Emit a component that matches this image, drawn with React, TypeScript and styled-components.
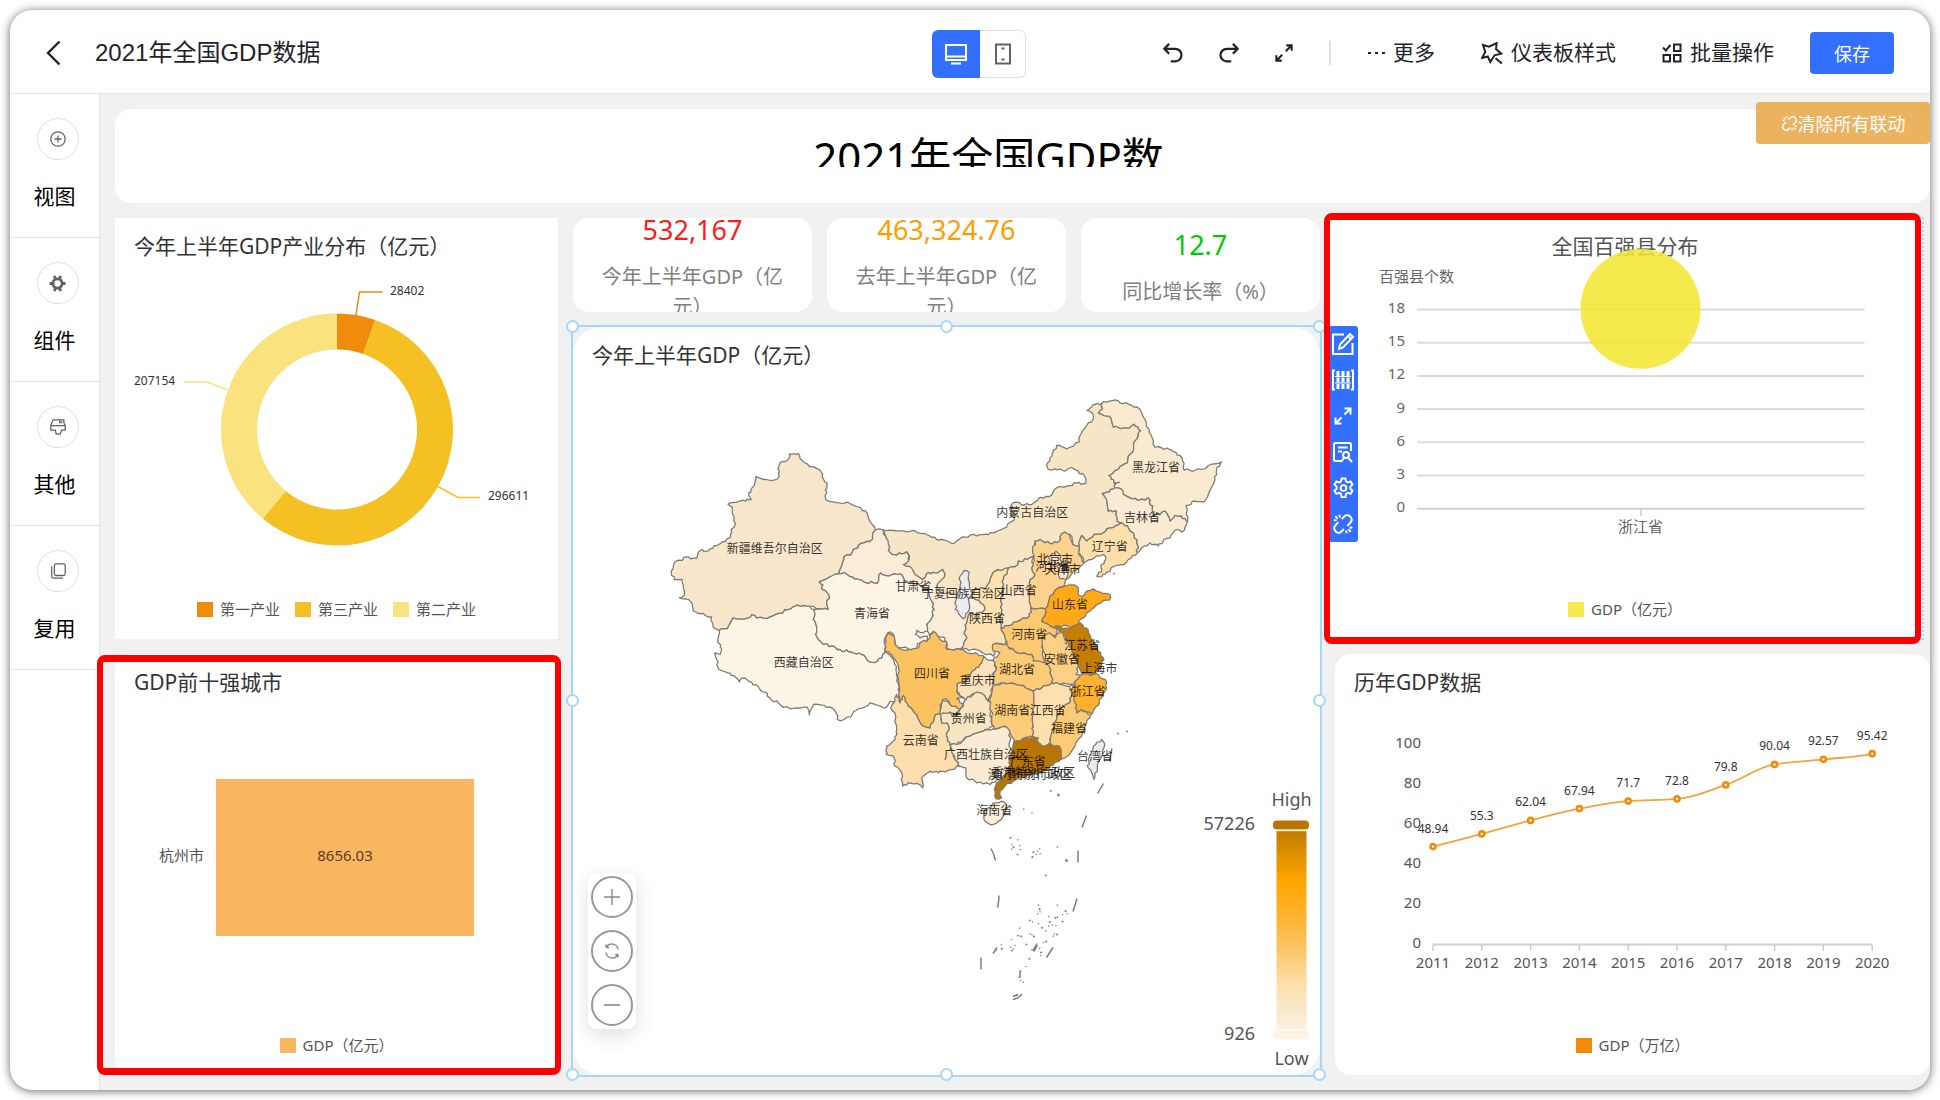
import React from "react";
import styled, { createGlobalStyle, css } from "styled-components";

const UI_FONT = `"Liberation Sans", "Noto Sans CJK SC", sans-serif`;
const CHART_FONT = `"Noto Sans", "Noto Sans CJK SC", sans-serif`;
const BLUE = "#3370ff";
const SELECT = "#a6d7fb";

const GlobalStyle = createGlobalStyle`
  *, *::before, *::after { box-sizing: border-box; }
  body { margin: 0; background: #fff; font-family: ${UI_FONT}; color: #1f2329; }
  button { font-family: inherit; margin: 0; padding: 0; border: 0; background: none; color: inherit; cursor: pointer; }
  h1, h2, p { margin: 0; font-weight: 400; }
`;

/* ---------- shell ---------- */

const Page = styled.div`
  min-height: 100vh;
  padding: 10px;
  display: flex;
`;

const Shell = styled.div`
  flex: 1;
  min-width: 0;
  display: flex;
  flex-direction: column;
  background: #fff;
  border-radius: 22px;
  overflow: hidden;
  box-shadow: 0 1px 10px rgba(0, 0, 0, 0.6);
`;

const Header = styled.header`
  height: 84px;
  padding: 2px 36px 0;
  display: grid;
  grid-template-columns: 1fr auto 1fr;
  align-items: center;
  border-bottom: 1px solid #e3e4e6;
`;

const HeaderLeft = styled.div`
  display: flex;
  align-items: center;
  gap: 34px;
`;

const HeaderTitle = styled.h1`
  font-size: 24px;
  line-height: 32px;
  white-space: nowrap;
`;

const HeaderRight = styled.div`
  display: flex;
  align-items: center;
  justify-content: flex-end;
  gap: 36px;
`;

const Menu = styled.div`
  display: flex;
  align-items: center;
  gap: 46px;
`;

const Divider = styled.span`
  width: 2px;
  height: 24px;
  background: #dcdfe6;
`;

const IconButton = styled.button`
  display: flex;
  align-items: center;
  justify-content: center;
`;

const TextButton = styled.button`
  display: flex;
  align-items: center;
  gap: 8px;
  font-size: 21px;
  line-height: 30px;
  white-space: nowrap;
`;

const SaveButton = styled.button`
  width: 84px;
  height: 42px;
  border-radius: 4px;
  background: ${BLUE};
  color: #fff;
  font-size: 18px;
`;

const Toggle = styled.div`
  display: flex;
  margin: 2px 0 0 18px;
  height: 48px;
`;

const ToggleButton = styled.button<{ $active?: boolean }>`
  display: flex;
  align-items: center;
  justify-content: center;
  ${(p) =>
    p.$active
      ? css`
          width: 48px;
          background: ${BLUE};
          color: #fff;
          border-radius: 6px 0 0 6px;
        `
      : css`
          width: 46px;
          color: #606266;
          border: 1px solid #dcdfe6;
          border-left: 0;
          border-radius: 0 6px 6px 0;
        `}
`;

const Body = styled.div`
  flex: 1;
  display: flex;
`;

const Sidebar = styled.nav`
  width: 90px;
  flex: none;
  border-right: 1px solid #e3e4e6;
`;

const SideItem = styled.button`
  width: 100%;
  height: 144px;
  padding-top: 24px;
  display: flex;
  flex-direction: column;
  align-items: center;
  gap: 21px;
  border-bottom: 1px solid #e3e4e6;
  color: #000;
  font-size: 21px;
  line-height: 32px;
`;

const SideCircle = styled.span`
  width: 42px;
  height: 42px;
  margin-left: 6px;
  display: flex;
  align-items: center;
  justify-content: center;
  border: 1px solid #dcdfe6;
  border-radius: 50%;
  color: #606266;
`;

/* ---------- canvas ---------- */

const Canvas = styled.main`
  position: relative;
  flex: 1;
  min-width: 0;
  padding: 15px 0 15px 15px;
  display: flex;
  flex-direction: column;
  gap: 15px;
  background: #f1f1f1;
  font-family: ${CHART_FONT};
`;

const Banner = styled.section`
  height: 94px;
  padding-top: 20px;
  padding-right: 68px;
  border-radius: 16px;
  background: #fff;
`;

const BannerTitle = styled.h2`
  width: 378px;
  height: 38px;
  margin: 0 auto;
  overflow: hidden;
  color: #000;
  font-size: 42px;
  line-height: 56px;
  text-align: center;
  word-break: break-all;
`;

const ClearButton = styled.button`
  position: absolute;
  top: 8px;
  right: 0;
  width: 174px;
  height: 42px;
  display: flex;
  align-items: center;
  justify-content: center;
  border-radius: 4px;
  background: rgba(230, 162, 60, 0.82);
  color: #fff;
  font-family: ${UI_FONT};
  font-size: 18px;
`;

const Columns = styled.div`
  flex: 1;
  display: grid;
  grid-template-columns: 443fr 747fr 595fr;
  gap: 15px;
`;

const Column = styled.div`
  min-width: 0;
  display: flex;
  flex-direction: column;
  gap: 15px;
`;

const Card = styled.section<{ $square?: boolean; $shifted?: boolean }>`
  position: relative;
  flex: 1;
  min-height: 421px;
  display: flex;
  flex-direction: column;
  background: #fff;
  border-radius: ${(p) => (p.$square ? "0" : "16px")};
  ${(p) =>
    p.$shifted &&
    css`
      margin: 0 7px 0 -8px;
      border-radius: 0;
      outline: 2px dotted ${SELECT};
      outline-offset: -1px;
    `}
`;

const CardTitle = styled.h2<{ $center?: boolean }>`
  height: 56px;
  flex: none;
  padding: 0 19px;
  color: ${(p) => (p.$center ? "#555" : "#333")};
  font-size: 21px;
  line-height: 56px;
  text-align: ${(p) => (p.$center ? "center" : "left")};
  white-space: nowrap;
`;

const Plot = styled.svg`
  display: block;
  width: 100%;
  height: 0;
  flex: 1 1 0;
  overflow: visible;
`;

const Legend = styled.div`
  height: 60px;
  flex: none;
  display: flex;
  align-items: center;
  justify-content: center;
  gap: 15px;
  color: #555;
  font-size: 15px;
  line-height: 20px;
`;

const LegendItem = styled.span<{ $color: string }>`
  display: flex;
  align-items: center;
  gap: 7px;
  &::before {
    content: "";
    width: 16px;
    height: 15px;
    background: ${(p) => p.$color};
  }
`;

const Highlight = styled.div<{ $inset: string }>`
  position: absolute;
  inset: ${(p) => p.$inset};
  border: solid #f00;
  border-width: 7px 6px;
  border-radius: 8px;
  pointer-events: none;
  z-index: 3;
`;

const Stats = styled.div`
  display: grid;
  grid-template-columns: repeat(3, 1fr);
  gap: 15px;
`;

const Stat = styled.section`
  height: 94px;
  padding: 0 24px;
  display: flex;
  flex-direction: column;
  align-items: center;
  justify-content: center;
  overflow: hidden;
  border-radius: 16px;
  background: #fff;
`;

const StatValue = styled.strong<{ $color: string }>`
  flex: none;
  margin-bottom: 10px;
  color: ${(p) => p.$color};
  font-size: 27px;
  font-weight: 400;
  line-height: 44px;
`;

const StatLabel = styled.span`
  flex: none;
  color: #808080;
  font-size: 20px;
  line-height: 30px;
  text-align: center;
`;

const MapCard = styled.section`
  position: relative;
  flex: 1;
  display: flex;
  flex-direction: column;
  border-radius: 28px;
  background: #fff;
`;

const Selection = styled.div`
  position: absolute;
  inset: -2px;
  border: 2px solid ${SELECT};
  pointer-events: none;
`;

const Handle = styled.i<{ $x: number; $y: number }>`
  position: absolute;
  left: ${(p) => p.$x}%;
  top: ${(p) => p.$y}%;
  width: 13px;
  height: 13px;
  margin: -7px;
  border: 2px solid ${SELECT};
  border-radius: 50%;
  background: #fff;
`;

const ZoomPanel = styled.div`
  position: absolute;
  left: 15px;
  bottom: 46px;
  width: 48px;
  padding: 3px 0;
  display: flex;
  flex-direction: column;
  align-items: center;
  gap: 12px;
  border-radius: 8px;
  background: #fff;
  box-shadow: 0 6px 20px rgba(0, 0, 0, 0.13);
`;

const ZoomButton = styled.button`
  width: 42px;
  height: 42px;
  display: flex;
  align-items: center;
  justify-content: center;
  border: 2px solid #999;
  border-radius: 50%;
  color: #8a8a8a;
`;

const CardTools = styled.div`
  position: absolute;
  left: 1px;
  top: 108px;
  width: 30px;
  z-index: 2;
  display: flex;
  flex-direction: column;
  border-radius: 3px;
  background: ${BLUE};
  color: #fff;
`;

const ToolButton = styled.button`
  height: 36px;
  display: flex;
  align-items: center;
  justify-content: center;
`;

/* ---------- icons ---------- */

const Icon = ({
  size = 20,
  box = 20,
  w = 2,
  children,
}: {
  size?: number;
  box?: number;
  w?: number;
  children: React.ReactNode;
}) => (
  <svg width={size} height={size} viewBox={`0 0 ${box} ${box}`} fill="none" stroke="currentColor" strokeWidth={w} aria-hidden="true">
    {children}
  </svg>
);

const UnlinkIcon = ({ size, w }: { size: number; w: number }) => (
  <Icon size={size} box={24} w={w}>
    <path d="M7 10 3.5 13.8a4 4 0 0 0 0 5.6l1 1a4 4 0 0 0 5.6 0L13 17.5" />
    <path d="M10.5 6.5 13.8 3.5a4 4 0 0 1 5.6 0l1 1a4 4 0 0 1 0 5.6L16.8 14" />
    <path d="M2 7.5l3 .8M3.6 3.6l2.6 2.6M8 1.8l.8 3M16 22l-.7-3M20.4 20.4l-2.6-2.6M22.2 16.3l-3-.8" />
  </Icon>
);

const GearPath =
  "M10 1.5h4l.6 3 1.9 1.1 2.9-1 2 3.4-2.3 2v2.2l2.3 2-2 3.4-2.9-1-1.9 1.1-.6 3.3h-4l-.6-3.3-1.9-1.1-2.9 1-2-3.4 2.3-2V10l-2.3-2 2-3.4 2.9 1 1.9-1.1z";

/* ---------- pie ---------- */

const industries = [
  { name: "第一产业", value: 28402, color: "#f18c0b" },
  { name: "第三产业", value: 296611, color: "#f5c023" },
  { name: "第二产业", value: 207154, color: "#fae27e" },
];

const ringPath = (from: number, to: number) => {
  const [cx, cy, R, r] = [337, 429.5, 116, 80];
  const at = (a: number, k: number) =>
    `${(cx + k * Math.sin(a * 2 * Math.PI)).toFixed(2)} ${(cy - k * Math.cos(a * 2 * Math.PI)).toFixed(2)}`;
  const big = to - from > 0.5 ? 1 : 0;
  return `M${at(from, R)}A${R} ${R} 0 ${big} 1 ${at(to, R)}L${at(to, r)}A${r} ${r} 0 ${big} 0 ${at(from, r)}Z`;
};

const PieChart = () => {
  const total = industries.reduce((s, d) => s + d.value, 0);
  let acc = 0;
  return (
    <Plot viewBox="115 274 443 305" role="img" aria-label="今年上半年GDP产业分布">
      {industries.map((d) => {
        const from = acc / total;
        acc += d.value;
        return <path key={d.name} d={ringPath(from, acc / total)} fill={d.color} />;
      })}
      <g fill="none" strokeWidth="1.5">
        <path d="M356 315 359.5 292H382.5" stroke="#f18c0b" />
        <path d="M438 486.5 458 497.5H480" stroke="#f5c023" />
        <path d="M227 389.5 207 382H184" stroke="#fae27e" />
      </g>
      <g fontSize="12" fill="#333">
        <text x="390" y="295">28402</text>
        <text x="488" y="500">296611</text>
        <text x="134" y="385">207154</text>
      </g>
    </Plot>
  );
};

/* ---------- bar ---------- */

const BarChart = () => (
  <Plot viewBox="115 710 443 305" role="img" aria-label="GDP前十强城市" fontSize="15">
    <rect x="216" y="779" width="258" height="157" fill="#f9b55f" />
    <text x="345" y="861" textAnchor="middle" fill="#5a4022">8656.03</text>
    <text x="204" y="861" textAnchor="end" fill="#555">杭州市</text>
  </Plot>
);

/* ---------- bubble ---------- */

const BubbleChart = () => (
  <Plot viewBox="1327 274 596 305" role="img" aria-label="全国百强县分布" fontSize="15" fill="#666">
    <text x="1379" y="282">百强县个数</text>
    {[18, 15, 12, 9, 6, 3, 0].map((v, i) => (
      <g key={v}>
        <text x="1405" y={313 + Math.round(i * 33.2)} textAnchor="end">
          {v}
        </text>
        <path d={`M1417 ${309.5 + i * 33.2}H1864.5`} stroke={v ? "#dcdcdc" : "#d0d0d0"} strokeWidth="2" />
      </g>
    ))}
    <path d="M1641 509v7" stroke="#ccc" strokeWidth="1.5" />
    <circle cx="1640.5" cy="308.8" r="60" fill="rgb(243,231,50)" fillOpacity="0.87" />
    <text x="1640.5" y="532" textAnchor="middle">浙江省</text>
  </Plot>
);

/* ---------- line ---------- */

const yearly: [number, number][] = [
  [2011, 48.94],
  [2012, 55.3],
  [2013, 62.04],
  [2014, 67.94],
  [2015, 71.7],
  [2016, 72.8],
  [2017, 79.8],
  [2018, 90.04],
  [2019, 92.57],
  [2020, 95.42],
];

const LineChart = () => {
  const pts = yearly.map(([, v], i) => [1433 + i * 48.8, 944.5 - v * 2]);
  const slope = (i: number) => {
    if (i === 0 || i === pts.length - 1) return -0.25;
    const a = (pts[i][1] - pts[i - 1][1]) / 48.8;
    const b = (pts[i + 1][1] - pts[i][1]) / 48.8;
    return (2 * a * b) / (a + b);
  };
  const d = pts
    .map(([x, y], i) => {
      if (!i) return `M${x} ${y}`;
      const [px, py] = pts[i - 1];
      return `C${px + 18} ${py + slope(i - 1) * 18} ${x - 18} ${y - slope(i) * 18} ${x} ${y}`;
    })
    .join("");
  return (
    <Plot viewBox="1335 710 595 305" role="img" aria-label="历年GDP数据" fontSize="15" fill="#555">
      {[100, 80, 60, 40, 20, 0].map((v) => (
        <text key={v} x="1421" y={948 - v * 2} textAnchor="end">
          {v}
        </text>
      ))}
      <path d="M1433 944.5H1872.5" stroke="#d0d0d0" strokeWidth="2" />
      <path d={d} fill="none" stroke="#f5a33a" strokeWidth="1.8" />
      {yearly.map(([year, v], i) => (
        <g key={year}>
          <path d={`M${pts[i][0]} 945v6`} stroke="#ccc" strokeWidth="1.5" />
          <circle cx={pts[i][0]} cy={pts[i][1]} r="2.5" fill="#fff" stroke="#f18c0b" strokeWidth="2.6" />
          <text x={pts[i][0]} y={pts[i][1] - 14} textAnchor="middle" fontSize="12" fill="#333">
            {v}
          </text>
          <text x={pts[i][0]} y="968" textAnchor="middle">
            {year}
          </text>
        </g>
      ))}
    </Plot>
  );
};

/* ---------- map ---------- */

type Pt = [number, number];
/* Outlines are kept in three local grids: west, north-east and south-east. */
const ORIGIN: Record<string, Pt> = { w: [0, 0], n: [900, 0], e: [660, 540] };

const provinces: [string, string, string][] = [
  ["w", "#fcf4e5", "238,752 262,747 278,715 310,719 322,716 336,705 350,715 372,716 390,712 408,704 428,700 434,690 458,682 488,678 510,680 522,690 525,705 520,720 528,735 527,765 537,782 548,793 575,799 600,810 625,816 658,821 672,827 680,840 695,848 712,845 725,835 735,818 750,828 762,845 770,862 770,890 775,915 777,945 768,965 750,965 738,985 715,978 690,970 665,986 648,993 632,1012 612,1020 592,1020 588,1000 575,985 545,977 522,974 508,1006 502,984 470,985 430,984 415,970 392,960 376,938 360,930 335,908 320,900 305,896 298,907 280,888 258,878 236,870 230,840 224,820 240,825 245,808 233,785"],
  ["w", "#f7e6cb", "462,222 475,222 480,237 493,249 508,261 522,262 538,270 548,284 550,298 562,312 561,326 555,350 558,361 580,367 600,370 630,372 650,381 668,394 680,399 686,417 696,434 706,451 699,460 698,478 690,486 672,490 655,498 638,516 632,527 612,531 606,556 598,583 575,592 560,598 538,607 549,616 547,630 562,640 569,656 560,668 565,690 545,689 528,687 510,680 488,678 458,682 434,690 428,700 408,704 390,712 372,716 350,715 336,705 322,716 310,719 278,715 262,747 238,752 220,743 215,712 196,708 180,703 160,694 157,675 145,660 118,654 133,648 130,625 126,600 103,600 94,574 103,550 120,542 145,532 152,538 170,536 180,514 205,514 230,498 255,486 272,474 273,450 287,433 283,412 277,400 276,382 264,374 290,368 310,362 334,360 327,348 336,325 348,291 358,295 380,300 402,302 418,290 416,262 420,250 436,246 447,236 448,223"],
  ["n", "#f7e6c6", "-172,450 -140,453 -100,457 -75,454 -45,462 -30,470 -5,482 25,486 36,492 60,478 90,467 130,465 160,460 190,447 222,422 213,395 213,378 225,368 245,376 275,375 297,355 325,352 350,325 380,320 410,310 437,312 437,295 415,275 395,264 375,275 345,268 325,270 320,260 335,230 350,198 380,208 418,187 422,165 445,130 460,118 458,102 441,93 460,75 485,72 488,88 475,100 492,108 508,110 520,143 550,145 568,146 582,134 602,153 595,170 582,188 578,218 565,230 562,250 535,270 506,288 522,308 525,325 500,338 487,342 500,360 505,395 530,395 532,425 545,430 525,440 500,448 490,460 462,465 440,485 425,468 418,500 398,495 390,465 375,458 360,472 358,485 330,492 300,480 285,485 283,530 262,540 235,545 225,562 200,570 165,575 150,600 138,628 110,628 90,650 60,665 20,655 -15,640 -5,600 15,585 8,570 -15,580 -40,582 -52,600 -80,575 -110,555 -95,545 -92,528 -100,517 -115,523 -143,525 -155,512 -155,495"],
  ["w", "#faecd6", "706,451 728,450 738,475 745,495 745,512 757,525 785,523 800,517 808,530 805,545 790,555 808,560 820,575 848,600 860,582 885,580 908,570 915,585 895,610 892,630 905,640 945,645 1000,655 1030,675 1035,690 1015,705 985,705 982,720 975,755 978,780 962,808 940,812 920,805 915,775 898,772 880,757 868,768 862,755 860,735 875,715 882,690 872,660 866,640 850,620 820,612 795,605 780,583 770,585 745,590 722,580 712,612 700,610 672,608 655,600 630,592 612,579 598,583 606,556 612,531 632,527 638,516 655,498 672,490 690,486 698,478 699,460"],
  ["w", "#fcf4e5", "538,607 560,598 598,583 612,579 630,592 655,600 672,608 700,610 712,612 722,580 745,590 770,585 780,583 795,605 820,612 850,620 866,640 872,660 882,690 875,715 860,735 862,755 850,760 830,752 826,765 840,775 862,770 860,785 845,795 832,793 832,812 805,808 785,805 765,795 758,762 743,760 734,778 738,800 735,818 725,835 712,845 695,848 680,840 672,827 658,821 625,816 600,810 575,799 548,793 537,782 527,765 528,735 520,720 525,705 522,690 545,689 565,690 560,668 569,656 562,640 547,630 549,616"],
  ["n", "#f9ead0", "485,72 500,68 535,64 550,72 565,74 590,82 605,100 615,120 628,160 640,185 645,203 665,205 695,212 720,228 728,245 733,272 765,273 785,270 805,258 845,247 830,270 825,300 805,345 790,368 765,365 738,378 742,428 725,410 705,408 690,425 675,395 660,405 640,410 638,380 628,370 625,355 600,362 570,355 550,345 543,328 525,325 522,318 538,308 522,308 506,288 535,270 562,250 565,230 578,218 582,188 595,170 602,153 582,134 568,146 550,145 520,143 508,110 492,108 475,100 488,88"],
  ["n", "#f9ebd4", "500,338 525,325 543,328 550,345 570,355 600,362 625,355 628,370 638,380 640,410 660,405 675,395 690,425 705,408 725,410 742,428 735,442 725,458 710,450 690,475 672,480 655,500 630,490 612,500 592,520 590,490 580,460 565,445 545,430 532,425 530,395 505,395 500,360 487,342"],
  ["n", "#fddfac", "545,430 565,445 580,460 590,490 592,520 565,540 552,555 530,558 500,578 478,592 470,590 485,570 482,560 497,540 490,525 468,530 455,540 430,550 425,530 415,520 418,500 425,468 440,485 462,465 490,460 500,448 525,440"],
  ["n", "#fdd28c", "285,485 300,480 330,492 358,485 360,472 375,458 388,465 398,495 418,500 415,520 432,550 420,562 400,575 378,600 372,620 345,632 330,650 316,688 272,685 268,660 270,600 285,585 275,565 283,545 278,520"],
  ["n", "#fce2bb", "325,532 348,515 362,530 365,548 345,562 328,552"],
  ["n", "#fce8cc", "362,560 378,555 385,580 378,600 360,598 355,580"],
  ["n", "#fae4c3", "262,540 283,530 275,565 285,585 270,600 268,660 272,685 268,710 235,725 210,738 183,745 180,720 185,690 182,660 190,630 190,600 205,565 225,562 235,545"],
  ["n", "#fde1b0", "205,565 190,600 190,630 182,660 185,690 180,720 183,745 195,770 200,795 160,795 165,815 160,830 120,815 95,810 62,808 78,780 75,755 82,720 90,700 115,705 135,690 130,675 100,655 90,650 110,628 138,628 150,600 165,575"],
  ["n", "#ebecef", "72,573 88,580 85,600 88,620 98,640 85,660 88,690 70,718 55,700 45,690 50,655 60,625 60,590"],
  ["n", "#ffa916", "316,688 330,650 345,632 380,618 400,616 415,625 414,645 430,650 440,635 460,628 480,638 510,645 508,662 490,663 470,675 455,690 440,700 425,718 415,732 395,748 370,738 350,748 330,740 305,726 315,708"],
  ["n", "#fbc972", "272,685 316,688 315,708 305,726 330,740 350,748 345,770 320,770 310,790 308,815 315,852 280,845 275,825 230,820 200,797 195,770 183,745 210,738 235,725 268,710"],
  ["e", "#c47d00", "585,200 630,208 660,190 672,205 685,212 692,235 700,245 715,275 732,300 725,320 700,345 665,345 655,310 640,290 625,250 610,225"],
  ["e", "#fdcf83", "550,230 570,220 585,235 600,215 625,250 640,290 655,310 648,345 665,350 640,375 600,375 575,370 572,330 560,310 548,265"],
  ["e", "#fccb76", "398,255 440,255 445,262 470,280 515,285 520,305 560,312 572,330 575,370 545,385 520,395 490,378 425,370 395,380 400,350 408,320 400,300 420,280 400,275"],
  ["e", "#fce2bb", "370,290 405,310 408,325 400,340 398,370 395,400 385,425 370,405 340,402 315,420 290,395 290,375 320,360 345,330 365,310"],
  ["e", "#fddfaf", "110,405 120,430 130,408 145,440 170,465 190,500 210,505 222,478 240,455 245,420 262,425 270,435 300,450 285,468 270,458 245,465 245,490 262,490 268,505 260,530 270,555 285,600 300,620 265,632 235,640 210,635 185,655 188,685 172,672 150,670 128,680 125,640 105,620 100,590 78,585 80,560 105,540 110,510 105,460 92,445"],
  ["e", "#f8e5c4", "345,400 370,405 385,425 395,440 390,470 398,500 370,515 330,530 310,540 290,555 270,555 260,530 268,505 262,490 245,490 242,465 270,458 285,470 310,440 318,420"],
  ["e", "#fbc25f", "88,220 100,225 105,255 125,270 155,270 178,260 180,250 205,240 220,215 232,228 240,240 258,245 262,270 300,270 320,280 345,280 372,292 365,310 345,330 320,360 290,375 290,395 312,415 290,418 310,440 300,450 270,435 258,418 248,420 240,455 222,478 210,505 190,500 170,465 145,440 130,408 120,430 117,375 115,320 105,300 95,285 75,270 75,240"],
  ["e", "#feb030", "665,345 700,345 715,345 740,370 735,395 725,415 710,440 695,465 665,450 650,460 640,430 635,400 645,365"],
  ["e", "#fccc7a", "425,370 490,378 520,395 522,430 518,470 520,500 518,530 500,535 480,545 465,555 455,530 435,500 400,508 395,480 398,460 390,440 395,400 398,380"],
  ["e", "#fde0ad", "520,395 545,385 575,370 600,375 630,380 637,405 628,430 600,450 585,490 575,520 565,555 545,560 535,550 518,530 520,500 518,470 522,430"],
  ["e", "#fccb78", "637,405 645,430 650,460 665,450 690,465 680,490 665,530 645,560 615,595 603,600 598,570 570,555 575,520 585,490 600,450 628,430"],
  ["e", "#faebd2", "290,555 330,530 370,515 400,508 438,502 450,520 448,550 455,590 450,620 430,650 405,668 390,675 350,670 320,655 318,625 300,620 285,600 270,557"],
  ["e", "#b87504", "465,545 480,545 500,533 535,535 535,550 545,560 565,555 598,560 602,600 570,620 545,640 500,648 470,660 435,680 420,695 425,715 408,718 403,690 410,670 430,650 450,620 448,600"],
  ["e", "#fbeedb", "405,730 425,725 440,735 435,760 415,785 400,795 375,785 372,760 385,745"],
  ["e", "#ebecee", "725,540 733,550 728,585 712,625 702,660 685,625 685,600 700,560"],
];

const mapLabels: [string, string, number, number][] = [
  ["w", "新疆维吾尔自治区", 404, 509],
  ["w", "甘肃省", 820, 622],
  ["e", "宁夏回族自治区", 311, 103],
  ["w", "青海省", 696, 704],
  ["w", "西藏自治区", 491, 851],
  ["w", "四川省", 876, 884],
  ["n", "黑龙江省", 648, 266],
  ["n", "吉林省", 606, 416],
  ["n", "辽宁省", 509, 503],
  ["n", "内蒙古自治区", 277, 401],
  ["n", "北京市", 345, 540],
  ["n", "河北省", 340, 562],
  ["n", "天津市", 368, 570],
  ["n", "山西省", 236, 634],
  ["n", "陕西省", 141, 719],
  ["n", "山东省", 390, 677],
  ["n", "河南省", 268, 767],
  ["n", "江苏省", 426, 800],
  ["e", "安徽省", 606, 300],
  ["e", "湖北省", 471, 332],
  ["e", "重庆市", 353, 364],
  ["e", "上海市", 718, 327],
  ["e", "浙江省", 683, 396],
  ["e", "湖南省", 457, 454],
  ["e", "江西省", 563, 454],
  ["e", "福建省", 627, 507],
  ["e", "贵州省", 326, 479],
  ["e", "云南省", 182, 545],
  ["e", "广西壮族自治区", 378, 587],
  ["e", "广东省", 503, 608],
  ["e", "台湾省", 705, 592],
  ["e", "香港特别行政区", 520, 641],
  ["e", "澳门特别行政区", 509, 647],
  ["e", "海南省", 403, 754],
];

/* Breaks long straight borders; both neighbours of a border get the same kinks. */
const roughen = (points: Pt[]): Pt[] =>
  points.flatMap((a, i) => {
    const b = points[(i + 1) % points.length];
    const len = Math.hypot(b[0] - a[0], b[1] - a[1]);
    if (len < 13) return [a];
    const flip = a[0] > b[0] || (a[0] === b[0] && a[1] > b[1]) ? -1 : 1;
    const n = len > 24 ? 3 : 1;
    const mids: Pt[] = [];
    for (let k = 1; k <= n; k++) {
      const t = k / (n + 1);
      const kk = flip > 0 ? k : n + 1 - k;
      const h = Math.abs(Math.sin((a[0] + b[0]) * 12.9 + (a[1] + b[1]) * 78.2 + kk * 37.7) * 4375.5) % 1;
      const off = ((h - 0.5) * 8 * flip) / len;
      mids.push([a[0] + (b[0] - a[0]) * t - (b[1] - a[1]) * off, a[1] + (b[1] - a[1]) * t + (b[0] - a[0]) * off]);
    }
    return [a, ...mids];
  });

const toPoints = (grid: string, src: string) => {
  const [ox, oy] = ORIGIN[grid];
  const pts = src.split(" ").map((p) => {
    const [x, y] = p.split(",").map(Number);
    return [x + ox, y + oy] as Pt;
  });
  return roughen(pts)
    .map(([x, y]) => `${x.toFixed(1)},${y.toFixed(1)}`)
    .join(" ");
};

const islets =
  "883,172 897,178 886,192 889,200 901,195 902,208 897,222 885,206 940,205 928,215 936,212 941,220 926,230 933,222 975,200 952,285 909,86 925,97 962,31 938,374 975,374 940,386 936,400 941,394 991,392 985,402 994,400 971,412 958,408 975,410 921,420 926,424 938,430 960,425 958,437 965,434 985,423 972,435 952,452 945,442 901,443 921,460 929,468 925,463 969,460 974,462 967,467 899,466 904,468 885,477 897,465 914,492 865,492 884,500 886,510 892,495 948,486 953,483 935,497 940,503 943,516 925,508 942,525 920,535 913,558 903,572 901,590 903,600 908,605 866,505 855,510 889,505 895,645";

const ChinaMap = () => (
  <Plot viewBox="573 383 747 691" role="img" aria-label="今年上半年GDP地图">
    <defs>
      <linearGradient id="heat" x1="0" y1="0" x2="0" y2="1">
        <stop offset="0" stopColor="#c17b00" />
        <stop offset="0.25" stopColor="#ffa500" />
        <stop offset="0.45" stopColor="#fdb534" />
        <stop offset="0.6" stopColor="#fac568" />
        <stop offset="0.77" stopColor="#fddfa9" />
        <stop offset="0.9" stopColor="#f7e8cb" />
        <stop offset="1" stopColor="#fbf1df" />
      </linearGradient>
    </defs>
    <g transform="translate(640 379) scale(0.33333)" stroke="#7d7a74" strokeWidth="3.8" strokeLinejoin="round">
      {provinces.map(([grid, color, src], i) => (
        <polygon key={i} points={toPoints(grid, src)} fill={color} />
      ))}
    </g>
    <g stroke="#777" strokeWidth="1.4" fill="none">
      <path d="M991 848q3 5 4.500 12M999 895q0 6-1.500 12M981 957v12M1053 947l-6.500 10M1077 898l-4 13M1078 850v12M1086.500 815l-4.500 12M1103.500 783l-6 10M1112 748l-2.500 12" />
      <path d="M993 953l4-6M1013 999l5-1.500 4-4M1033 950l4-7M1034 951l3-6M1020 970v6M1013 996l5-2" />
    </g>
    <g fill="#888">
      {islets.split(" ").map((p, i) => {
        const [x, y] = p.split(",").map(Number);
        return <circle key={i} cx={560 + x / 1.96} cy={780 + y / 3} r={i % 3 ? 0.8 : 1.1} />;
      })}
      <circle cx="1058.500" cy="794.500" r="1.500" />
      <circle cx="1066.500" cy="860" r="1.500" />
      <circle cx="1094" cy="590" r="1" />
      <circle cx="1114" cy="573" r="1" />
      <circle cx="1118" cy="733" r="1" />
      <circle cx="1127" cy="731" r="1" />
    </g>
    <g fontSize="12" fill="#000" fillOpacity="0.8" textAnchor="middle">
      {mapLabels.map(([grid, name, x, y]) => (
        <text key={name} x={640 + (x + ORIGIN[grid][0]) / 3} y={383 + (y + ORIGIN[grid][1]) / 3}>
          {name}
        </text>
      ))}
    </g>
    <rect x="1276.500" y="830" width="30" height="199" fill="url(#heat)" />
    <rect x="1273" y="820" width="36" height="9" rx="4" fill="#b97502" />
    <path d="M1275 830H1307" stroke="#fff" strokeOpacity="0.8" strokeWidth="1.500" />
    <rect x="1273" y="1030" width="36" height="9" rx="4" fill="#fcf3e4" />
    <g fontSize="18" fill="#555">
      <text x="1291.500" y="805" textAnchor="middle">High</text>
      <text x="1255" y="829" textAnchor="end">57226</text>
      <text x="1255" y="1039" textAnchor="end">926</text>
      <text x="1291.500" y="1064" textAnchor="middle">Low</text>
    </g>
  </Plot>
);

/* ---------- app ---------- */

const sideItems = [
  {
    label: "视图",
    icon: (
      <Icon size={18} w={1.4}>
        <circle cx="10" cy="10" r="8" />
        <path d="M6 10h8M10 6v8" />
      </Icon>
    ),
  },
  {
    label: "组件",
    icon: (
      <Icon size={17} w={3.4}>
        <circle cx="10" cy="10" r="5.4" />
        <path d="M6.200 1.200 7.800 5M13.800 1.200 12.200 5M6.200 18.800 7.800 15M13.800 18.800 12.200 15M.6 10H4M16 10h3.400" />
      </Icon>
    ),
  },
  {
    label: "其他",
    icon: (
      <Icon size={18} w={1.4}>
        <path d="M4.500 2H16.500V5.500L18 8V13.500H14L12.500 18H8L7 13.500H2V8L3 5.500zM2.500 8.500H17.500M12 2V5H14V3.500" />
      </Icon>
    ),
  },
  {
    label: "复用",
    icon: (
      <Icon size={18} w={1.4}>
        <rect x="6" y="2" width="12" height="13" rx="2" />
        <path d="M3.500 5.500H3v10.500a2 2 0 0 0 2 2h9.500v-1" />
      </Icon>
    ),
  },
];

const expandPaths = <path d="M11.500 2.500H17.500V8.500M17 3 11.500 8.500M2.500 11.500V17.500H8.500M3 17 8.500 11.500" />;

const tools = [
  {
    label: "编辑",
    icon: (
      <Icon size={24} box={24} w={2}>
        <path d="M13 2.500H2V22h19.500V11M8 17l1-4.500L19 2l3 3L12 15.500zM17 4l3 3" />
      </Icon>
    ),
  },
  {
    label: "数据",
    icon: (
      <Icon size={22} box={22} w={2}>
        <path d="M3 1.500H1v19h2M19 1.500h2v19h-2" />
        <path d="M6 2v18M11 2v18M16 2v18" strokeWidth="3" strokeDasharray="5 1.500" />
        <path d="M3 7.500h16M3 14h16" strokeWidth="1" />
      </Icon>
    ),
  },
  { label: "放大", icon: <Icon size={20}>{expandPaths}</Icon> },
  {
    label: "详情",
    icon: (
      <Icon size={22} box={22} w={2}>
        <path d="M9 20H3.500a1.500 1.500 0 0 1-1.500-1.500v-15A1.500 1.500 0 0 1 3.500 2h14A1.500 1.500 0 0 1 19 3.500V10M6 6.500h9.500M6 10.500h4" />
        <circle cx="14" cy="14" r="3" />
        <path d="M16 16.500l4 4.500M12 17l-3 4" />
      </Icon>
    ),
  },
  {
    label: "设置",
    icon: (
      <Icon size={23} box={24} w={2}>
        <path d={GearPath} />
        <circle cx="12" cy="11.500" r="3" />
      </Icon>
    ),
  },
  { label: "取消联动", icon: <UnlinkIcon size={22} w={2.2} /> },
];

export default function App() {
  return (
    <Page>
      <GlobalStyle />
      <Shell>
        <Header>
          <HeaderLeft>
            <IconButton aria-label="返回">
              <svg width="15" height="26" viewBox="0 0 15 26" fill="none" stroke="#1f2329" strokeWidth="2.400">
                <path d="M13.500 1.500 2 13l11.500 11.500" />
              </svg>
            </IconButton>
            <HeaderTitle>2021年全国GDP数据</HeaderTitle>
          </HeaderLeft>
          <Toggle>
            <ToggleButton $active aria-label="桌面端">
              <Icon size={22} box={22}>
                <path d="M1 2h20v15H1zM1 13.500h20" />
                <path d="M6 20.500h10" />
              </Icon>
            </ToggleButton>
            <ToggleButton aria-label="移动端">
              <Icon size={22} box={22}>
                <path d="M4 1.500h14v19H4z" />
                <path d="M9.500 5.500h3M9.500 16.500h3" />
              </Icon>
            </ToggleButton>
          </Toggle>
          <HeaderRight>
            <IconButton aria-label="撤销">
              <Icon size={20} box={18}>
                <path d="M5.500 .8 1.200 5.200 5.500 9.600M1.500 5.200H11a5.600 5.600 0 0 1 0 11.300H7" />
              </Icon>
            </IconButton>
            <IconButton aria-label="重做">
              <Icon size={20} box={18}>
                <path d="M12.500 .8l4.300 4.400L12.500 9.600M16.500 5.200H7a5.600 5.600 0 0 0 0 11.300h4" />
              </Icon>
            </IconButton>
            <IconButton aria-label="全屏">
              <Icon size={18} w={2.3}>
                <path d="M12.500 1.500H18.500V7.500M18 2 12 8M1.500 12.500V18.500H7.500M2 18 8 12" />
              </Icon>
            </IconButton>
            <Divider />
            <Menu>
              <TextButton>
                <svg width="18" height="18" viewBox="0 0 18 18" fill="currentColor" aria-hidden="true">
                  <rect x="1" y="8" width="3" height="2" />
                  <rect x="8" y="8" width="3" height="2" />
                  <rect x="15" y="8" width="3" height="2" />
                </svg>
                更多
              </TextButton>
              <TextButton>
                <Icon size={22} box={22} w={2}>
                  <path d="M2 3 8 4.700 15.700 1 15 7 20.400 11.700 13.600 13.300 9.300 20 6.800 14.500 1 16 4.300 10zM14.500 16.200l6.500 5.300" />
                </Icon>
                仪表板样式
              </TextButton>
              <TextButton>
                <Icon size={20}>
                  <path d="M1 4.500l2.800 3L8.500 2M12 1.500h6.500V8H12zM1.500 12H8v6.500H1.500zM12 12h6.500v6.500H12z" />
                </Icon>
                批量操作
              </TextButton>
            </Menu>
            <SaveButton>保存</SaveButton>
          </HeaderRight>
        </Header>

        <Body>
          <Sidebar>
            {sideItems.map((item) => (
              <SideItem key={item.label}>
                <SideCircle>{item.icon}</SideCircle>
                {item.label}
              </SideItem>
            ))}
          </Sidebar>

          <Canvas>
            <Banner>
              <BannerTitle>2021年全国GDP数据</BannerTitle>
            </Banner>
            <ClearButton>
              <UnlinkIcon size={17} w={2} />
              清除所有联动
            </ClearButton>

            <Columns>
              <Column>
                <Card $square>
                  <CardTitle>今年上半年GDP产业分布（亿元）</CardTitle>
                  <PieChart />
                  <Legend>
                    {industries.map((d) => (
                      <LegendItem key={d.name} $color={d.color}>
                        {d.name}
                      </LegendItem>
                    ))}
                  </Legend>
                </Card>
                <Card>
                  <CardTitle>GDP前十强城市</CardTitle>
                  <BarChart />
                  <Legend>
                    <LegendItem $color="#f9b55f">GDP（亿元）</LegendItem>
                  </Legend>
                  <Highlight $inset="1px -3px 0 -18px" />
                </Card>
              </Column>

              <Column>
                <Stats>
                  <Stat>
                    <StatValue $color="#ff1a1a">532,167</StatValue>
                    <StatLabel>今年上半年GDP（亿元）</StatLabel>
                  </Stat>
                  <Stat>
                    <StatValue $color="#ff9d00">463,324.76</StatValue>
                    <StatLabel>去年上半年GDP（亿元）</StatLabel>
                  </Stat>
                  <Stat>
                    <StatValue $color="#00cc00">12.7</StatValue>
                    <StatLabel>同比增长率（%）</StatLabel>
                  </Stat>
                </Stats>
                <MapCard>
                  <CardTitle>今年上半年GDP（亿元）</CardTitle>
                  <ChinaMap />
                  <ZoomPanel>
                    <ZoomButton aria-label="放大地图">
                      <Icon size={16} box={16} w={1.4}>
                        <path d="M0 8h16M8 0v16" />
                      </Icon>
                    </ZoomButton>
                    <ZoomButton aria-label="重置地图">
                      <Icon size={16} box={16} w={1.4}>
                        <path d="M2 4.500V1.500M2 4.500h3M2.300 4.200A6.300 6.300 0 0 1 14 6.500M14 11.500v3M14 11.500h-3M13.700 11.800A6.300 6.300 0 0 1 2 9.500" />
                      </Icon>
                    </ZoomButton>
                    <ZoomButton aria-label="缩小地图">
                      <Icon size={16} box={16} w={1.6}>
                        <path d="M0 8h16" />
                      </Icon>
                    </ZoomButton>
                  </ZoomPanel>
                  <Selection>
                    {[0, 50, 100].flatMap((y) =>
                      [0, 50, 100]
                        .filter((x) => !(x === 50 && y === 50))
                        .map((x) => <Handle key={`${x}-${y}`} $x={x} $y={y} />)
                    )}
                  </Selection>
                </MapCard>
              </Column>

              <Column>
                <Card $shifted>
                  <CardTitle $center>全国百强县分布</CardTitle>
                  <BubbleChart />
                  <Legend>
                    <LegendItem $color="#f5ea4e">GDP（亿元）</LegendItem>
                  </Legend>
                  <CardTools>
                    {tools.map((t) => (
                      <ToolButton key={t.label} aria-label={t.label}>
                        {t.icon}
                      </ToolButton>
                    ))}
                  </CardTools>
                  <Highlight $inset="-5px 2px -5px -3px" />
                </Card>
                <Card>
                  <CardTitle>历年GDP数据</CardTitle>
                  <LineChart />
                  <Legend>
                    <LegendItem $color="#f18c0b">GDP（万亿）</LegendItem>
                  </Legend>
                </Card>
              </Column>
            </Columns>
          </Canvas>
        </Body>
      </Shell>
    </Page>
  );
}
